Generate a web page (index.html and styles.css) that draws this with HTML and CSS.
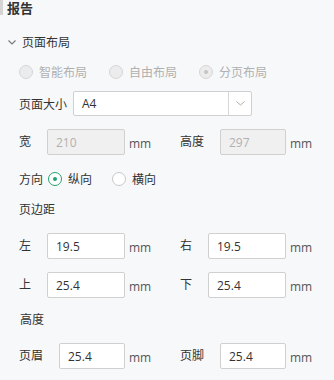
FILE: index.html
```html
<!DOCTYPE html>
<html lang="zh-CN">
<head>
  <meta charset="UTF-8">
  <title>报告</title>
  <link rel="stylesheet" href="styles.css">
</head>
<body>

  <div class="panel-title">报告</div>

  <div class="section-head">
    <svg class="chevron" width="8" height="5" viewBox="0 0 8 5"><path d="M0.5 0.5 L4 4 L7.5 0.5" fill="none" stroke="#777" stroke-width="1.1"/></svg>
    <span>页面布局</span>
  </div>

  <div class="radio-row layout-modes">
    <label class="radio disabled"><span class="dot"></span>智能布局</label>
    <label class="radio disabled"><span class="dot"></span>自由布局</label>
    <label class="radio disabled checked"><span class="dot"></span>分页布局</label>
  </div>

  <div class="row size-row">
    <span class="label">页面大小</span>
    <div class="select">
      <span class="select-value">A4</span>
      <span class="select-arrow">
        <svg width="9" height="5" viewBox="0 0 9 5"><path d="M0.5 0.5 L4.5 4 L8.5 0.5" fill="none" stroke="#aaa" stroke-width="1"/></svg>
      </span>
    </div>
  </div>

  <div class="row pair">
    <div class="half">
      <span class="label">宽</span>
      <input class="num w78" type="text" value="210" disabled>
      <span class="unit">mm</span>
    </div>
    <div class="half right">
      <span class="label">高度</span>
      <input class="num w66" type="text" value="297" disabled>
      <span class="unit">mm</span>
    </div>
  </div>

  <div class="radio-row orient">
    <span class="label">方向</span>
    <label class="radio checked"><span class="dot"></span>纵向</label>
    <label class="radio"><span class="dot"></span>横向</label>
  </div>

  <div class="sub-title">页边距</div>

  <div class="row pair">
    <div class="half">
      <span class="label">左</span>
      <input class="num w78" type="text" value="19.5">
      <span class="unit">mm</span>
    </div>
    <div class="half right">
      <span class="label">右</span>
      <input class="num w78" type="text" value="19.5">
      <span class="unit">mm</span>
    </div>
  </div>

  <div class="row pair">
    <div class="half">
      <span class="label">上</span>
      <input class="num w78" type="text" value="25.4">
      <span class="unit">mm</span>
    </div>
    <div class="half right">
      <span class="label">下</span>
      <input class="num w78" type="text" value="25.4">
      <span class="unit">mm</span>
    </div>
  </div>

  <div class="sub-title small">高度</div>

  <div class="row pair">
    <div class="half">
      <span class="label">页眉</span>
      <input class="num w66" type="text" value="25.4">
      <span class="unit">mm</span>
    </div>
    <div class="half right">
      <span class="label">页脚</span>
      <input class="num w66" type="text" value="25.4">
      <span class="unit">mm</span>
    </div>
  </div>

</body>
</html>
```

FILE: styles.css
```css
html, body {
  margin: 0;
  height: 100%;
  overflow: hidden;
}
body {
  font-family: "Open Sans", "Noto Sans CJK SC", sans-serif;
  font-size: 12px;
  color: #333;
  background-color: #f7f8fa;
}
.panel-title {
  position: relative;
  height: 16px;
  line-height: 16px;
  padding-left: 7px;
  font-size: 13px;
  font-weight: bold;
  color: #333;
}
.panel-title::before {
  content: "";
  position: absolute;
  left: 0;
  top: 0;
  width: 3px;
  height: 15px;
  background-color: #d4d4d4;
}
.section-head {
  display: flex;
  align-items: center;
  height: 20px;
  margin-top: 16px;
  padding-left: 8px;
  font-size: 12px;
}
.chevron {
  margin-right: 6px;
}
.radio-row {
  display: flex;
  align-items: center;
  padding-left: 19px;
}
.layout-modes {
  height: 20px;
  margin-top: 10px;
}
.layout-modes .radio {
  width: 90px;
}
.radio {
  display: flex;
  align-items: center;
  color: #333;
}
.radio .dot {
  position: relative;
  box-sizing: border-box;
  width: 14px;
  height: 14px;
  margin-right: 6px;
  border: 1px solid #c9c9c9;
  border-radius: 50%;
  background-color: #fff;
}
.radio.checked .dot {
  border-color: #23a26d;
}
.radio.checked .dot::after {
  content: "";
  position: absolute;
  left: 4px;
  top: 4px;
  width: 4px;
  height: 4px;
  border-radius: 50%;
  background-color: #23a26d;
}
.radio.disabled {
  color: #b0b0b0;
}
.radio.disabled .dot {
  border-color: #d6d6d6;
  background-color: #ececec;
}
.radio.disabled.checked .dot::after {
  background-color: #c4c4c4;
}
.row {
  display: flex;
  align-items: center;
  padding-left: 19px;
}
.size-row {
  margin-top: 9px;
}
.size-row .label {
  width: 54px;
}
.select {
  display: flex;
  box-sizing: border-box;
  width: 179px;
  height: 25px;
  border: 1px solid #d0d0d0;
  border-radius: 2px;
  background-color: #fff;
}
.select-value {
  flex: 1;
  line-height: 23px;
  padding-left: 8px;
  color: #333;
}
.select-arrow {
  display: flex;
  align-items: center;
  justify-content: center;
  width: 22px;
  border-left: 1px solid #d8d8d8;
}
.pair {
  margin-top: 13px;
}
.half {
  display: flex;
  align-items: center;
  width: 161px;
}
.half.right {
  width: 154px;
}
.half .label {
  flex: 1;
  margin-top: -2px;
}
.num {
  box-sizing: border-box;
  height: 26px;
  padding: 0 8px;
  border: 1px solid #d0d0d0;
  border-radius: 2px;
  background-color: #fff;
  font-family: "Open Sans", "Noto Sans CJK SC", sans-serif;
  font-size: 12px;
  color: #333;
  outline: none;
}
.num:disabled {
  background-color: #f0f0f0;
  color: #b0b0b0;
}
.w78 {
  width: 78px;
}
.w66 {
  width: 66px;
}
.unit {
  width: 51px;
  margin-left: 4px;
  margin-top: 2px;
  color: #555;
}
.half.right .unit {
  width: 44px;
}
.orient {
  height: 20px;
  margin-top: 14px;
}
.orient .label {
  width: 29px;
}
.orient .radio {
  width: 64px;
}
.sub-title {
  height: 20px;
  line-height: 20px;
  margin-top: 11px;
  padding-left: 19px;
}
.sub-title.small {
  padding-left: 20px;
  margin-top: 12px;
}
```
